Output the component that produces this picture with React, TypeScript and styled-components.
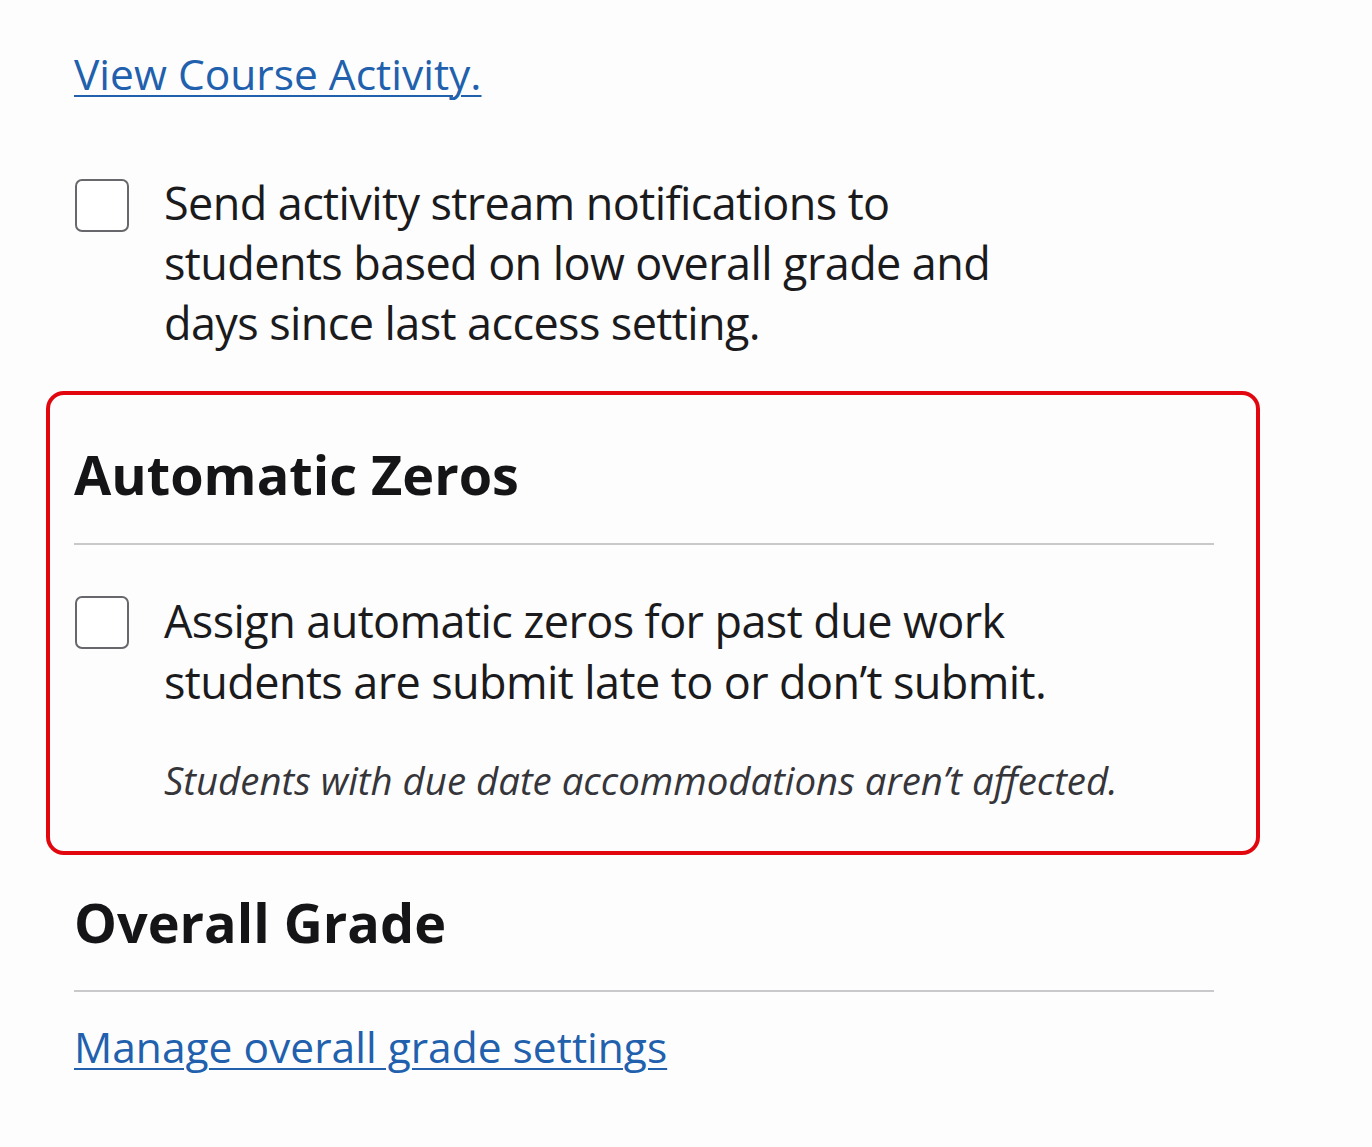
import React from "react"
import styled, { createGlobalStyle } from "styled-components"

const GlobalStyle = createGlobalStyle`
  html, body {
    margin: 0;
    padding: 0;
    background: #fdfdfd;
  }
  body {
    font-family: "Open Sans", "Noto Sans", sans-serif;
    color: #1b1b1d;
  }
`

const Page = styled.main`
  width: 1140px;
  padding: 44px 0 60px 74px;
`

const TextLink = styled.a`
  display: inline-block;
  font-size: 42.5px;
  line-height: 60px;
  color: #2160ad;
  text-decoration: underline;
  text-decoration-thickness: 2px;
  text-underline-offset: 5px;
  cursor: pointer;
`

const CheckRow = styled.label<{ top: number }>`
  display: grid;
  grid-template-columns: 54px 1fr;
  column-gap: 35px;
  align-items: start;
  margin-top: ${p => p.top}px;
  padding-left: 1px;
`

const Box = styled.input.attrs({ type: "checkbox" })`
  appearance: none;
  margin: 6px 0 0 0;
  width: 54px;
  height: 53px;
  box-sizing: border-box;
  border: 2.5px solid #68686c;
  border-radius: 7px;
  background: #fff;
`

const LabelText = styled.span<{ lead?: number }>`
  font-size: 45px;
  line-height: ${p => p.lead ?? 60}px;
  letter-spacing: -0.6px;
  max-width: 895px;
`

const Highlight = styled.section`
  margin: 38px -46px 0 -28px;
  padding: 44px 42px 43px 24px;
  border: 4px solid #e2070f;
  border-radius: 18px;
`

const Heading = styled.h2`
  margin: 0;
  font-size: 54px;
  font-weight: 700;
  line-height: 70px;
  color: #151517;
`

const Divider = styled.hr<{ gap?: number }>`
  margin: ${p => p.gap ?? 34}px 0 0 0;
  border: none;
  height: 2px;
  background: #c9c9cc;
`

const Note = styled.p`
  margin: 40px 0 0 90px;
  font-size: 38.4px;
  line-height: 56px;
  font-style: italic;
  color: #35353a;
`

const Section = styled.section`
  margin-top: 32px;
`

const LinkRow = styled.div`
  margin-top: 25px;
`

export default function App() {
  return (
    <>
      <GlobalStyle />
      <Page>
        <TextLink>View Course Activity.</TextLink>
        <CheckRow top={69}>
          <Box />
          <LabelText>
            Send activity stream notifications to students based on low overall
            grade and days since last access setting.
          </LabelText>
        </CheckRow>
        <Highlight>
          <Heading>Automatic Zeros</Heading>
          <Divider />
          <CheckRow top={45}>
            <Box />
            <LabelText lead={61}>
              Assign automatic zeros for past due work students are submit late
              to or don’t submit.
            </LabelText>
          </CheckRow>
          <Note>Students with due date accommodations aren’t affected.</Note>
        </Highlight>
        <Section>
          <Heading>Overall Grade</Heading>
          <Divider gap={33} />
          <LinkRow>
            <TextLink>Manage overall grade settings</TextLink>
          </LinkRow>
        </Section>
      </Page>
    </>
  )
}
